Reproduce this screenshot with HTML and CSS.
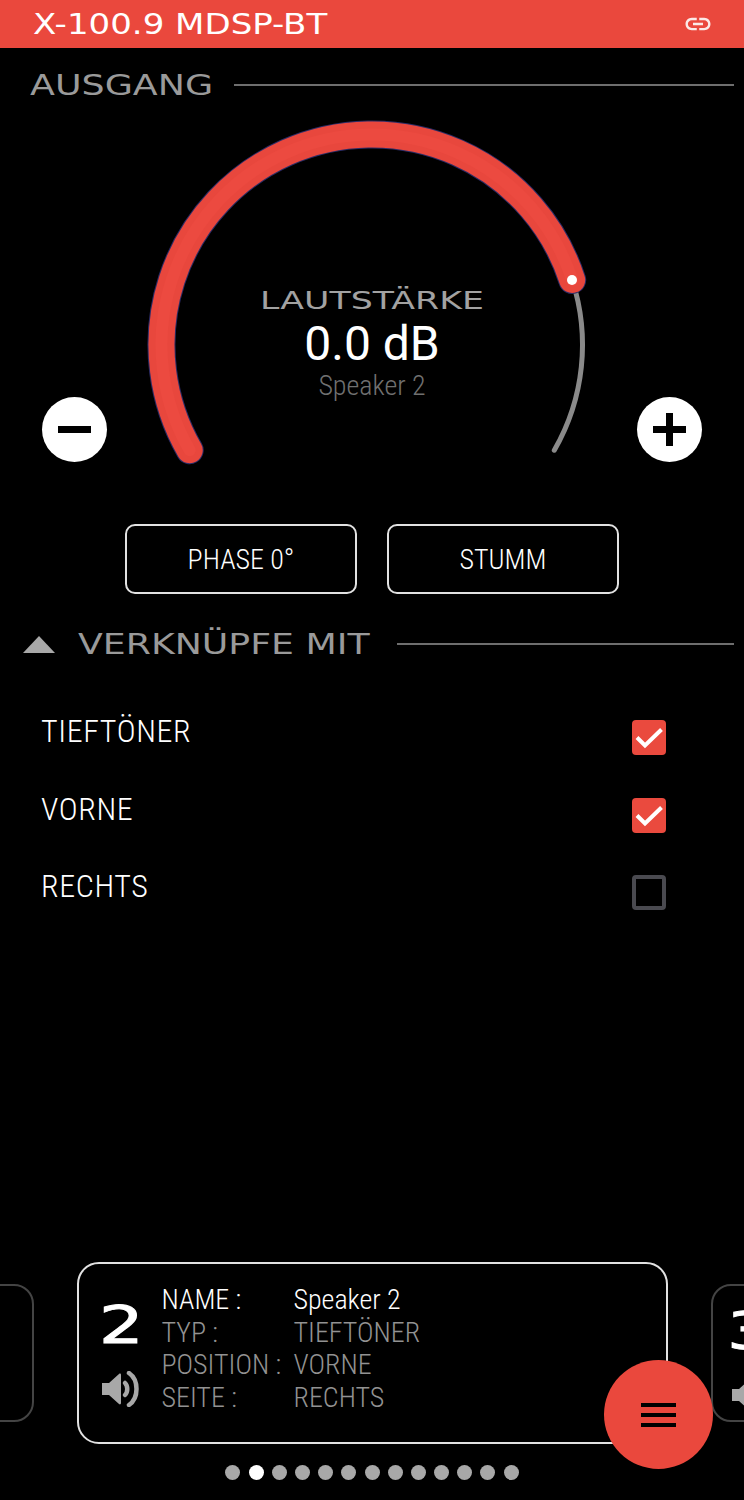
FILE: index.html
```html
<!DOCTYPE html>
<html lang="de">
<head>
<meta charset="utf-8">
<title>X-100.9 MDSP-BT</title>
<link rel="stylesheet" href="styles.css">
</head>
<body>
<div class="app">
  <header class="topbar">
    <span class="brand">X-100.9 MDSP-BT</span>
    <svg class="link-icon" viewBox="0 0 24 24"><path d="M3.9 12c0-1.71 1.39-3.1 3.1-3.1h4V7H7c-2.76 0-5 2.24-5 5s2.24 5 5 5h4v-1.9H7c-1.71 0-3.1-1.39-3.1-3.1zM8 13h8v-2H8v2zm9-6h-4v1.9h4c1.71 0 3.1 1.39 3.1 3.1s-1.39 3.1-3.1 3.1h-4V17h4c2.76 0 5-2.24 5-5s-2.24-5-5-5z"/></svg>
  </header>

  <div class="section-head head-output">
    <h2 class="section-title">AUSGANG</h2>
    <div class="rule"></div>
  </div>

  <div class="gauge">
    <svg class="gauge-svg" viewBox="0 100 744 400">
      <path class="arc-track" d="M554.3 450.25A210.500 210.500 0 0 0 572.2 280"/>
      <path class="arc-glow" d="M189.700 450.25A210.500 210.500 0 1 1 572.2 280"/>
      <path class="arc-fill" d="M189.700 450.25A210.500 210.500 0 1 1 572.2 280"/>
      <path class="arc-core" d="M189.700 450.25A210.500 210.500 0 1 1 572.2 280"/>
      <circle class="arc-dot" cx="572" cy="280" r="5"/>
    </svg>
    <div class="readout">
      <div class="readout-title">LAUTSTÄRKE</div>
      <div class="readout-value">0.0 dB</div>
      <div class="readout-name">Speaker 2</div>
    </div>
    <button class="round-btn minus" aria-label="Leiser"><span class="bar"></span></button>
    <button class="round-btn plus" aria-label="Lauter"><span class="bar"></span><span class="bar vert"></span></button>
  </div>

  <div class="actions">
    <button class="action">PHASE 0°</button>
    <button class="action">STUMM</button>
  </div>

  <div class="section-head head-link">
    <span class="triangle"></span>
    <h2 class="section-title">VERKNÜPFE MIT</h2>
    <div class="rule"></div>
  </div>

  <ul class="links">
    <li class="link-row"><span class="link-label">TIEFTÖNER</span>
      <span class="check on"><svg viewBox="0 0 34 34"><path d="M5 17l8 8L29.500 9"/></svg></span></li>
    <li class="link-row"><span class="link-label">VORNE</span>
      <span class="check on"><svg viewBox="0 0 34 34"><path d="M5 17l8 8L29.500 9"/></svg></span></li>
    <li class="link-row"><span class="link-label">RECHTS</span>
      <span class="check"></span></li>
  </ul>

  <div class="bottom">
    <div class="carousel">
      <div class="side-card left"></div>
      <div class="card">
        <div class="card-id">
          <span class="card-num">2</span>
          <svg class="speaker" viewBox="0 0 38 36"><path class="cone" d="M1 12h7L18 3c1-.8 2-.3 2 1v28c0 1.300-1 1.800-2 1L8 24H1z"/><path class="wave" d="M24 12c3 3 3 9 0 12"/><path class="wave" d="M28 2c10 7 10 25 0 32"/></svg>
        </div>
        <dl class="info">
          <dt class="hi">NAME :</dt><dd class="hi">Speaker 2</dd>
          <dt>TYP :</dt><dd>TIEFTÖNER</dd>
          <dt>POSITION :</dt><dd>VORNE</dd>
          <dt>SEITE :</dt><dd>RECHTS</dd>
        </dl>
      </div>
      <div class="side-card right">
        <span class="card-num">3</span>
        <svg class="speaker" viewBox="0 0 38 36"><path class="cone" d="M1 12h7L18 3c1-.8 2-.3 2 1v28c0 1.300-1 1.800-2 1L8 24H1z"/></svg>
      </div>
    </div>
    <div class="dots">
      <i class="dot"></i><i class="dot active"></i><i class="dot"></i><i class="dot"></i><i class="dot"></i><i class="dot"></i><i class="dot"></i><i class="dot"></i><i class="dot"></i><i class="dot"></i><i class="dot"></i><i class="dot"></i><i class="dot"></i>
    </div>
  </div>

  <button class="fab" aria-label="Menü"><span></span><span></span><span></span></button>
</div>
</body>
</html>
```
FILE: styles.css
```css
* { box-sizing: border-box; }
html, body { margin: 0; padding: 0; background: #000; }
body { font-family: "Roboto Condensed", "Liberation Sans Narrow", Roboto, sans-serif; font-weight: 300; color: #fff; }
.app { position: relative; width: 744px; height: 1500px; overflow: hidden; display: flex; flex-direction: column; background: #000; }

.topbar { height: 48px; flex: none; background: #ea483d; display: flex; align-items: center; justify-content: space-between; padding: 0 31px 0 33px; }
.brand { font-family: "DejaVu Sans", sans-serif; font-weight: 400; font-size: 28px; color: #fff; white-space: nowrap; line-height: 1; padding-top: 2px; transform: scaleX(1.215); transform-origin: left center; }
.link-icon { width: 30px; height: 30px; fill: #fbe9e7; }

.section-head { display: flex; align-items: center; height: 30px; padding-right: 10px; flex: none; }
.head-output { margin-top: 22px; padding-left: 30px; }
.head-link { margin-top: 35px; padding-left: 23px; }
.section-title { margin: 0; padding-top: 2px; font-family: "DejaVu Sans", sans-serif; font-weight: 400; font-size: 28px; line-height: 1; color: #9a9a9a; white-space: nowrap; transform-origin: left center; }
.head-output .section-title { transform: scaleX(1.30); }
.head-link .section-title { margin-left: 23px; transform: scaleX(1.295); }
.rule { flex: 1; height: 2px; background: #6e6e6e; margin-left: 63px; }
.head-link .rule { margin-left: 94px; }
.triangle { width: 0; height: 0; border-left: 16px solid transparent; border-right: 16px solid transparent; border-bottom: 17px solid #a8a8a8; }

.gauge { position: relative; height: 400px; flex: none; }
.gauge-svg { display: block; width: 744px; height: 400px; }
.gauge-svg path { fill: none; stroke-linecap: round; }
.arc-track { stroke: #8a8a8a; stroke-width: 5; }
.arc-glow { stroke: #2c2c66; stroke-width: 28; }
.arc-fill { stroke: #e8473d; stroke-width: 26; }
.arc-core { stroke: #ec4a40; stroke-width: 12; }
.arc-dot { fill: #fff; }
.readout { position: absolute; left: 0; right: 0; top: 187px; text-align: center; }
.readout-title { font-family: "DejaVu Sans", sans-serif; font-weight: 400; font-size: 25px; line-height: 28px; color: #a2a2a2; transform: scaleX(1.39); }
.readout-value { font-family: Roboto, sans-serif; font-weight: 400; font-size: 48px; line-height: 54px; margin-top: 2px; color: #fff; }
.readout-name { font-size: 28px; line-height: 30px; color: #707070; }
.round-btn { position: absolute; top: 297px; width: 65px; height: 65px; padding: 0; border: 0; border-radius: 50%; background: #fff; display: block; }
.minus { left: 42px; }
.plus { left: 637px; }
.bar { position: absolute; left: 16px; top: 29px; width: 33px; height: 7px; background: #000; }
.bar.vert { left: 29px; top: 16px; width: 7px; height: 33px; }

.actions { display: flex; justify-content: center; gap: 30px; margin-top: 24px; flex: none; }
.action { width: 232px; height: 70px; background: #000; border: 2px solid #e2e2e2; border-radius: 10px; color: #fff; font: inherit; font-size: 28px; padding: 0; }

.links { list-style: none; margin: 54px 0 0; padding: 0 78px 0 41px; flex: none; }
.link-row { display: flex; justify-content: space-between; align-items: flex-start; height: 77.5px; }
.link-label { font-size: 32px; line-height: 36px; letter-spacing: .6px; }
.check { width: 34px; height: 35px; margin-top: 7px; border-radius: 4px; border: 4px solid #4a4a50; display: block; }
.check.on { background: #ea4a3e; border: 0; }
.check svg { display: block; width: 34px; height: 35px; fill: none; stroke: #fff; stroke-width: 4; }

.bottom { margin-top: auto; padding-bottom: 20px; flex: none; }
.carousel { display: flex; align-items: center; justify-content: center; gap: 43px; height: 182px; }
.side-card { flex: none; width: 100px; height: 138px; border: 2px solid #444; border-radius: 20px; overflow: hidden; padding: 20px 0 0 14px; }
.side-card.left { margin-left: -66px; }
.side-card.right { margin-right: -66px; }
.card { flex: none; width: 591px; height: 182px; border: 2px solid #e2e2e2; border-radius: 22px; padding: 20px 0 0 20px; display: flex; gap: 24px; }
.card-id { width: 39px; display: flex; flex-direction: column; align-items: flex-start; flex: none; }
.card-num { display: block; font-family: "DejaVu Sans", sans-serif; font-weight: 400; font-size: 52px; line-height: 50px; margin-top: 16px; color: #fff; -webkit-text-stroke: 1px #fff; transform: scaleX(1.35); transform-origin: left center; }
.side-card .card-num { margin-top: 0; }
.speaker { display: block; width: 38px; height: 36px; margin: 21px 0 0 2px; }
.side-card .speaker { margin-left: 4px; }
.cone { fill: #a8a8a8; }
.wave { fill: none; stroke: #a8a8a8; stroke-width: 4.500; stroke-linecap: round; }
.info { margin: 0; display: grid; grid-template-columns: 132px auto; grid-auto-rows: 32.7px; font-size: 28px; line-height: 32.7px; color: #929292; align-content: start; }
.info dt, .info dd { margin: 0; white-space: nowrap; }
.info .hi { color: #fff; }

.dots { display: flex; justify-content: center; gap: 8.2px; margin-top: 21px; }
.dot { display: block; width: 15px; height: 15px; border-radius: 50%; background: #a8a8a8; }
.dot.active { background: #fff; }

.fab { position: absolute; left: 604px; top: 1360px; width: 109px; height: 109px; padding: 0; border: 0; border-radius: 50%; background: #ea483d; display: flex; flex-direction: column; align-items: center; justify-content: center; gap: 6px; }
.fab span { display: block; width: 35px; height: 4px; background: #000; }
```
